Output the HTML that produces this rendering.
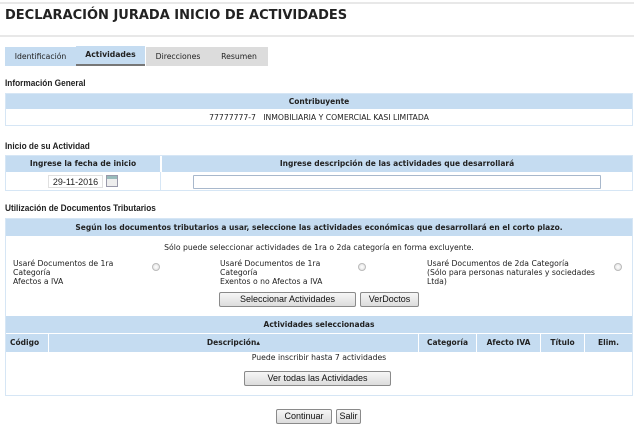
<!DOCTYPE html>
<html><head><meta charset="utf-8"><style>
*{margin:0;padding:0;box-sizing:border-box}
body{width:634px;height:429px;background:#fff;position:relative;overflow:hidden;font-family:"DejaVu Sans",Verdana,sans-serif;font-size:7.7px;color:#222}
.a{position:absolute}
.hd{background:#c5dcf1;font-weight:bold;text-align:center;color:#222;font-size:7.5px}
.lbl{font-family:"Liberation Sans",Arial,sans-serif;font-weight:bold;font-size:9px;color:#222;transform:scaleX(.92);transform-origin:left}
.box{border:1px solid #d6e6f5}
.btn{background:linear-gradient(#f6f6f6,#dcdcdc);border:1px solid #8a8a8a;border-radius:2px;font-family:"Liberation Sans",Arial,sans-serif;font-size:9px;text-align:center;color:#111}
.radio{width:8px;height:8px;border-radius:50%;border:1px solid #bbb;background:radial-gradient(#fff,#ddd)}
.th{background:#c5dcf1;font-weight:bold;border-left:1px solid #fff;height:18px;line-height:18px;font-size:7.5px}
</style></head><body>
<div class="a" style="left:0;top:2px;width:634px;height:2px;background:#e8e8e8"></div>
<div class="a" style="left:5px;top:8px;font-family:'DejaVu Sans',Verdana,sans-serif;font-weight:bold;font-size:13px;color:#222">DECLARACIÓN JURADA INICIO DE ACTIVIDADES</div>
<div class="a" style="left:0;top:35px;width:634px;height:2px;background:#e8e8e8"></div>

<div class="a" style="left:5px;top:47px;width:71px;height:19px;background:#c5dcf1;line-height:19px;text-align:center">Identificación</div>
<div class="a" style="left:76px;top:46px;width:69px;height:20px;background:#c5dcf1;border-bottom:2px solid #777;line-height:18px;text-align:center;font-weight:bold">Actividades</div>
<div class="a" style="left:146px;top:47px;width:122px;height:19px;background:#dcdcdc"></div>
<div class="a" style="left:146px;top:47px;width:64px;height:19px;line-height:19px;text-align:center">Direcciones</div>
<div class="a" style="left:210px;top:47px;width:58px;height:19px;line-height:19px;text-align:center">Resumen</div>

<div class="a lbl" style="left:5px;top:78px">Información General</div>
<div class="a box" style="left:5px;top:93px;width:628px;height:33px"></div>
<div class="a hd" style="left:6px;top:94px;width:626px;height:15px;line-height:15px">Contribuyente</div>
<div class="a" style="left:6px;top:110px;width:626px;height:15px;line-height:15px;text-align:center">77777777-7&nbsp;&nbsp;&nbsp;INMOBILIARIA Y COMERCIAL KASI LIMITADA</div>

<div class="a lbl" style="left:5px;top:141px">Inicio de su Actividad</div>
<div class="a box" style="left:5px;top:155px;width:628px;height:36px"></div>
<div class="a hd" style="left:6px;top:156px;width:154px;height:16px;line-height:16px">Ingrese la fecha de inicio</div>
<div class="a hd" style="left:162px;top:156px;width:470px;height:16px;line-height:16px">Ingrese descripción de las actividades que desarrollará</div>
<div class="a" style="left:160px;top:172px;width:1px;height:18px;background:#d6e6f5"></div>
<div class="a" style="left:48px;top:175px;width:55px;height:13px;border:1px solid #e0e0e0;font-family:'Liberation Sans',Arial;font-size:9px;line-height:12px;text-align:center">29-11-2016</div>
<div class="a" style="left:106px;top:175px;width:12px;height:12px;border:1px solid #99a;background:linear-gradient(#9bb 0 3px,#eee 3px)"></div>
<div class="a" style="left:193px;top:175px;width:408px;height:14px;border:1px solid #a8b8cc;border-radius:1px"></div>

<div class="a lbl" style="left:5px;top:203px">Utilización de Documentos Tributarios</div>
<div class="a box" style="left:5px;top:218px;width:628px;height:178px"></div>
<div class="a hd" style="left:6px;top:219px;width:626px;height:17px;line-height:17px">Según los documentos tributarios a usar, seleccione las actividades económicas que desarrollará en el corto plazo.</div>
<div class="a" style="left:6px;top:243px;width:626px;text-align:center">Sólo puede seleccionar actividades de 1ra o 2da categoría en forma excluyente.</div>
<div class="a" style="left:13px;top:259px;line-height:9px">Usaré Documentos de 1ra<br>Categoría<br>Afectos a IVA</div>
<div class="a radio" style="left:152px;top:263px"></div>
<div class="a" style="left:220px;top:259px;line-height:9px">Usaré Documentos de 1ra<br>Categoría<br>Exentos o no Afectos a IVA</div>
<div class="a radio" style="left:358px;top:263px"></div>
<div class="a" style="left:427px;top:259px;line-height:9px">Usaré Documentos de 2da Categoría<br>(Sólo para personas naturales y sociedades<br>Ltda)</div>
<div class="a radio" style="left:614px;top:263px"></div>
<div class="a btn" style="left:219px;top:292px;width:137px;height:15px;line-height:13px">Seleccionar Actividades</div>
<div class="a btn" style="left:360px;top:292px;width:59px;height:15px;line-height:13px">VerDoctos</div>

<div class="a hd" style="left:6px;top:316px;width:626px;height:17px;line-height:17px">Actividades seleccionadas</div>
<div class="a th" style="left:6px;top:334px;width:42px;padding-left:4px;border-left:none">Código</div>
<div class="a th" style="left:48px;top:334px;width:370px;text-align:center">Descripción▴</div>
<div class="a th" style="left:418px;top:334px;width:58px;text-align:center">Categoría</div>
<div class="a th" style="left:476px;top:334px;width:64px;text-align:center">Afecto IVA</div>
<div class="a th" style="left:540px;top:334px;width:44px;text-align:center">Título</div>
<div class="a th" style="left:584px;top:334px;width:48px;text-align:center">Elim.</div>
<div class="a" style="left:6px;top:353px;width:626px;text-align:center">Puede inscribir hasta 7 actividades</div>
<div class="a btn" style="left:244px;top:371px;width:147px;height:15px;line-height:13px">Ver todas las Actividades</div>

<div class="a btn" style="left:276px;top:409px;width:56px;height:15px;line-height:13px">Continuar</div>
<div class="a btn" style="left:336px;top:409px;width:25px;height:15px;line-height:13px">Salir</div>
</body></html>
